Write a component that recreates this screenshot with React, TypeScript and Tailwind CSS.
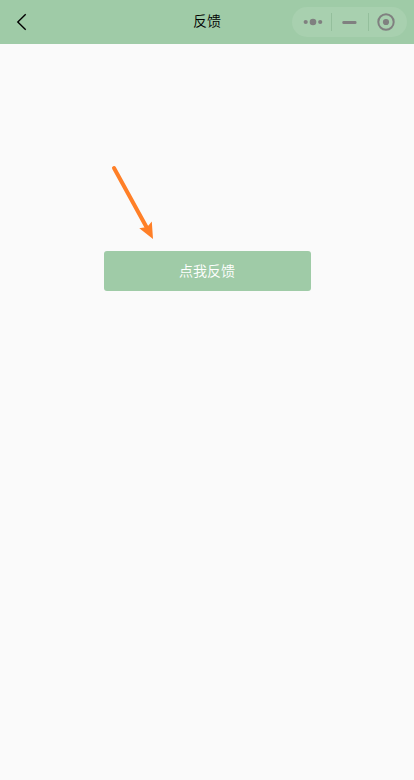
export default function App() {
  return (
    <div className="flex h-[780px] w-[414px] flex-col bg-[#fafafa] font-['Noto_Sans_CJK_SC',sans-serif]">
      <header className="grid h-11 shrink-0 grid-cols-[1fr_auto_1fr] items-center bg-[#9fcba7]">
        <button className="ml-4 w-3" aria-label="返回">
          <svg width="12" height="20" viewBox="0 0 12 20" fill="none" stroke="#000" strokeWidth="1.4">
            <path d="M9.7 2.2 L1.8 10 L9.7 17.8" />
          </svg>
        </button>
        <h1 className="pb-1 text-[14px] font-[350] leading-5 text-black">反馈</h1>
        <div className="mr-[7px] flex h-[30px] w-[115px] items-center justify-self-end rounded-full bg-[#a8d0af]">
          <svg width="115" height="30" viewBox="0 0 115 30" fill="#808080">
            <circle cx="13.7" cy="15" r="2.1" />
            <circle cx="21" cy="15" r="3.3" />
            <circle cx="28.2" cy="15" r="2.1" />
            <path d="M39.5 6v18M76.5 6v18" stroke="#94bf9c" />
            <rect x="50.3" y="14" width="14.2" height="3" rx="1.3" />
            <circle cx="94" cy="15" r="7.7" fill="none" stroke="#808080" strokeWidth="2" />
            <circle cx="94" cy="15" r="3.1" />
          </svg>
        </div>
      </header>
      <main className="relative flex flex-1 flex-col items-center pt-[207px]">
        <button className="h-10 w-[207px] rounded-[3px] bg-[#9fcba7] pb-[2px] text-[14px] font-[350] leading-[38px] text-white">
          点我反馈
        </button>
        <svg className="absolute left-[108px] top-[119px]" width="50" height="80" viewBox="108 163 50 80">
          <path d="M114 168 L147 228" stroke="#ff7f27" strokeWidth="4" strokeLinecap="round" />
          <path d="M153 239 L139.3 228.2 L145.5 227.2 L148.5 225.5 L151.8 221.6 Z" fill="#ff7f27" />
        </svg>
      </main>
    </div>
  );
}
